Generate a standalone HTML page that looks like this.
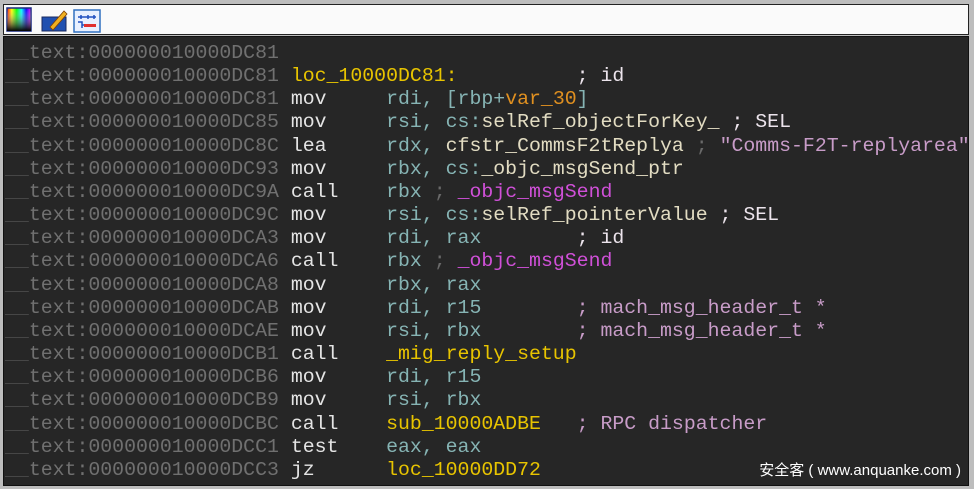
<!DOCTYPE html>
<html><head><meta charset="utf-8"><style>
body{margin:0;width:974px;height:489px;background:#bdbdbd;position:relative;overflow:hidden}
.tb{position:absolute;left:3px;top:4px;width:966px;height:31px;background:#fafafa;border:1px solid #222;box-sizing:border-box}
.code{position:absolute;left:3px;top:36px;width:966px;height:450px;background:#262626;border:1px solid #111;box-sizing:border-box}
pre{margin:0;position:absolute;left:1px;top:4px;font-family:"Liberation Mono",monospace;font-size:19.85px;line-height:23.15px;color:#e4e4e4;letter-spacing:0}
.a{color:#707070}.u{color:#4a4a4a}
.r{color:#86b4b4}.y{color:#e8c400}.o{color:#e09020}.b{color:#e2dcc2}
.m{color:#d050d8}.s{color:#6a6a6a}.p{color:#c89cc8}.w{color:#ece4ec}
.wm{position:absolute;right:13px;top:459px;font-family:"Liberation Sans","Noto Sans CJK SC",sans-serif;font-size:15px;color:#fff}
</style></head><body>
<div class="tb">
<svg width="100" height="29" style="position:absolute;left:2px;top:0">
<defs><linearGradient id="g" x1="0" x2="1"><stop offset="0" stop-color="#f00"/><stop offset=".2" stop-color="#ff0"/><stop offset=".4" stop-color="#0f0"/><stop offset=".6" stop-color="#0ff"/><stop offset=".8" stop-color="#00f"/><stop offset="1" stop-color="#f0f"/></linearGradient>
<linearGradient id="k" x1="0" y1="0" x2="0" y2="1"><stop offset="0" stop-color="#fff" stop-opacity="0"/><stop offset="1" stop-color="#000"/></linearGradient></defs>
<rect x="1" y="3" width="24" height="23" fill="url(#g)" stroke="#1a2a80" stroke-width="1.5"/>
<rect x="1" y="3" width="24" height="23" fill="url(#k)"/>
<rect x="36" y="12" width="24" height="14" fill="#2050b0" stroke="#1a2a60"/>
<path d="M44 22 L58 6 L61 9 L47 25 Z" fill="#f0b020" stroke="#804000" stroke-width=".8"/>
<rect x="68" y="5" width="26" height="22" fill="#e8f0ff" stroke="#3070c0" stroke-width="1.5"/>
<path d="M72 12h18M75 10v4M82 10v4M88 10v4M72 17h4v6M76 20h12" stroke="#2050c0" stroke-width="1.5" fill="none"/>
<rect x="78" y="19" width="12" height="3" fill="#e03030"/>
</svg>
</div>
<div class="code"><pre><span class="u">__</span><span class="a">text:000000010000DC81</span>
<span class="u">__</span><span class="a">text:000000010000DC81</span> <span class="y">loc_10000DC81:</span>          <span class="w">; id</span>
<span class="u">__</span><span class="a">text:000000010000DC81</span> mov     <span class="r">rdi, [rbp+</span><span class="o">var_30</span><span class="r">]</span>
<span class="u">__</span><span class="a">text:000000010000DC85</span> mov     <span class="r">rsi, cs:</span><span class="b">selRef_objectForKey_</span> <span class="w">; SEL</span>
<span class="u">__</span><span class="a">text:000000010000DC8C</span> lea     <span class="r">rdx, </span><span class="b">cfstr_CommsF2tReplya</span> <span class="s">;</span> <span class="p">"Comms-F2T-replyarea"</span>
<span class="u">__</span><span class="a">text:000000010000DC93</span> mov     <span class="r">rbx, cs:</span><span class="b">_objc_msgSend_ptr</span>
<span class="u">__</span><span class="a">text:000000010000DC9A</span> call    <span class="r">rbx</span> <span class="s">;</span> <span class="m">_objc_msgSend</span>
<span class="u">__</span><span class="a">text:000000010000DC9C</span> mov     <span class="r">rsi, cs:</span><span class="b">selRef_pointerValue</span> <span class="w">; SEL</span>
<span class="u">__</span><span class="a">text:000000010000DCA3</span> mov     <span class="r">rdi, rax</span>        <span class="w">; id</span>
<span class="u">__</span><span class="a">text:000000010000DCA6</span> call    <span class="r">rbx</span> <span class="s">;</span> <span class="m">_objc_msgSend</span>
<span class="u">__</span><span class="a">text:000000010000DCA8</span> mov     <span class="r">rbx, rax</span>
<span class="u">__</span><span class="a">text:000000010000DCAB</span> mov     <span class="r">rdi, r15</span>        <span class="p">; mach_msg_header_t *</span>
<span class="u">__</span><span class="a">text:000000010000DCAE</span> mov     <span class="r">rsi, rbx</span>        <span class="p">; mach_msg_header_t *</span>
<span class="u">__</span><span class="a">text:000000010000DCB1</span> call    <span class="y">_mig_reply_setup</span>
<span class="u">__</span><span class="a">text:000000010000DCB6</span> mov     <span class="r">rdi, r15</span>
<span class="u">__</span><span class="a">text:000000010000DCB9</span> mov     <span class="r">rsi, rbx</span>
<span class="u">__</span><span class="a">text:000000010000DCBC</span> call    <span class="y">sub_10000ADBE</span>   <span class="p">; RPC dispatcher</span>
<span class="u">__</span><span class="a">text:000000010000DCC1</span> test    <span class="r">eax, eax</span>
<span class="u">__</span><span class="a">text:000000010000DCC3</span> jz      <span class="y">loc_10000DD72</span></pre></div>
<div class="wm">安全客 ( www.anquanke.com )</div>
</body></html>
